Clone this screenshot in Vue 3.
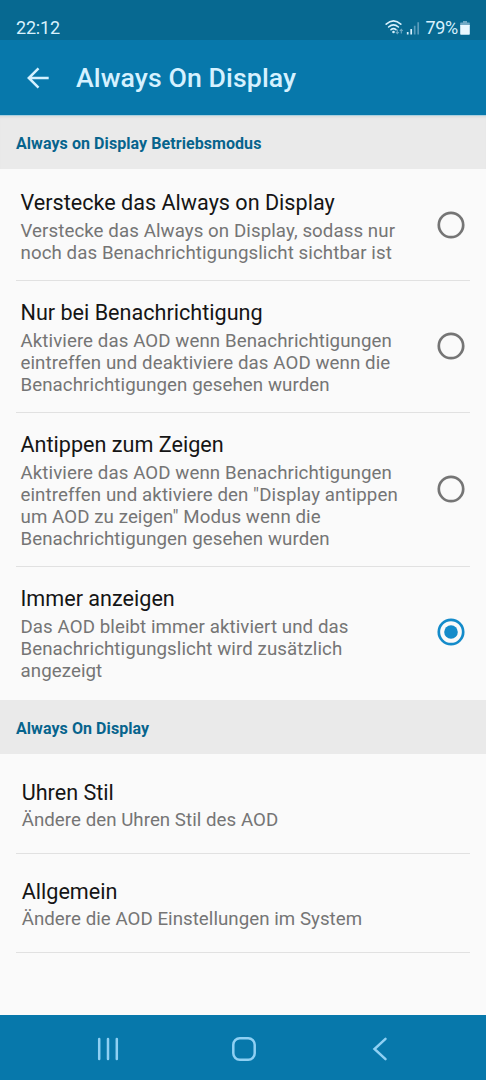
<script setup>
const modes = [
  {
    title: 'Verstecke das Always on Display',
    lines: ['Verstecke das Always on Display, sodass nur', 'noch das Benachrichtigungslicht sichtbar ist'],
    on: false,
  },
  {
    title: 'Nur bei Benachrichtigung',
    lines: ['Aktiviere das AOD wenn Benachrichtigungen', 'eintreffen und deaktiviere das AOD wenn die', 'Benachrichtigungen gesehen wurden'],
    on: false,
  },
  {
    title: 'Antippen zum Zeigen',
    lines: ['Aktiviere das AOD wenn Benachrichtigungen', 'eintreffen und aktiviere den "Display antippen', 'um AOD zu zeigen" Modus wenn die', 'Benachrichtigungen gesehen wurden'],
    on: false,
  },
  {
    title: 'Immer anzeigen',
    lines: ['Das AOD bleibt immer aktiviert und das', 'Benachrichtigungslicht wird zusätzlich', 'angezeigt'],
    on: true,
  },
]
const links = [
  { title: 'Uhren Stil', text: 'Ändere den Uhren Stil des AOD' },
  { title: 'Allgemein', text: 'Ändere die AOD Einstellungen im System' },
]
</script>

<template>
  <div class="screen">
    <div class="status">
      <span class="time">22:12</span>
      <svg class="signals" width="36" height="18" viewBox="0 0 36 18" fill="none">
        <g stroke="#d8f1fd" stroke-width="1.6" stroke-linecap="round">
          <path d="M1.2 5.2Q8.5-1.6 15.8 5.2" />
          <path d="M3.6 8Q8.5 3.6 13.4 8" />
          <path d="M6 10.7Q8.5 8.6 11 10.7" />
        </g>
        <circle cx="8.5" cy="13" r="1.3" fill="#d8f1fd" />
        <path d="M12.3 10.5v4M10.8 13l1.5 1.7 1.5-1.7M16.3 14.5v-4M14.8 12l1.5-1.7 1.5 1.7" stroke="#6fa9c4" stroke-width="1.1" />
        <path d="M22.7 13v2.6M26.2 10v5.6" stroke="#d8f1fd" stroke-width="1.7" />
        <path d="M29.7 6.7v8.9M33.2 3.2v12.4" stroke="#5b9dbc" stroke-width="1.7" />
      </svg>
      <span class="percent">79%</span>
      <svg class="battery" width="10" height="16" viewBox="0 0 10 16">
        <path d="M3 1h4v1.5h2.2a.6.6 0 0 1 .6.6V6H.2V3.1a.6.6 0 0 1 .6-.6H3z" fill="#72aac5" />
        <path d="M.2 5h9.600v9a.8.8 0 0 1-.8.8H1a.8.8 0 0 1-.8-.8z" fill="#e9f8ff" />
      </svg>
    </div>
    <header class="bar">
      <svg class="back" width="24" height="24" viewBox="0 0 24 24" fill="none" stroke="#d5f1ff" stroke-width="2.500">
        <path d="M22.700 12H3M12.500 2.300L2.800 12l9.700 9.700" />
      </svg>
      <h1>Always On Display</h1>
    </header>
    <h2 class="first">Always on Display Betriebsmodus</h2>
    <div class="modes">
      <div v-for="m in modes" :key="m.title" class="row">
        <div class="text">
          <div class="title">{{ m.title }}</div>
          <div v-for="l in m.lines" :key="l" class="desc">{{ l }}</div>
        </div>
        <svg class="radio" :class="{ on: m.on }" width="28" height="28" viewBox="0 0 28 28">
          <circle class="ring" cx="14" cy="14" r="12.200" />
          <circle v-if="m.on" class="dot" cx="14" cy="14" r="6.800" />
        </svg>
      </div>
    </div>
    <h2>Always On Display</h2>
    <div class="links">
      <div v-for="l in links" :key="l.title" class="link">
        <div class="title">{{ l.title }}</div>
        <div class="desc">{{ l.text }}</div>
      </div>
    </div>
    <nav>
      <svg width="24" height="26" viewBox="0 0 24 26"><path d="M3.200 3v20M12 3v20M20.800 3v20" /></svg>
      <svg width="26" height="26" viewBox="0 0 26 26"><rect x="2.300" y="2.300" width="21.400" height="21.400" rx="6.500" /></svg>
      <svg width="24" height="26" viewBox="0 0 24 26"><path d="M17.500 2.800L6.500 13l11 10.200" /></svg>
    </nav>
  </div>
</template>

<style>
body { margin: 0; background: #fafafa; }
</style>

<style scoped>
.screen {
  width: 486px;
  height: 1080px;
  display: flex;
  flex-direction: column;
  overflow: hidden;
  background: #fafafa;
  font-family: Roboto, sans-serif;
  white-space: nowrap;
}
.status {
  box-sizing: border-box;
  height: 40px;
  flex: none;
  padding: 16px 16px 0 16px;
  display: flex;
  align-items: center;
  background: #076991;
  color: #d8f1fd;
  font-size: 18px;
  line-height: 24px;
}
.time { flex: 1; letter-spacing: -0.2px; }
.percent { margin-left: 4px; letter-spacing: -0.3px; }
.battery { margin-left: 2px; }
.bar {
  box-sizing: border-box;
  height: 75px;
  flex: none;
  display: flex;
  align-items: center;
  padding-left: 26px;
  background: #0778ab;
}
h1 {
  margin: 0 0 0 26px;
  font-size: 26.700px;
  line-height: 32px;
  font-weight: 500;
  letter-spacing: 0.08px;
  color: #d5f1ff;
}
h2 {
  box-sizing: border-box;
  margin: 0;
  height: 54px;
  flex: none;
  padding: 2px 16px 0;
  background: #eaeaea;
  color: #07648d;
  font-size: 16px;
  line-height: 54px;
  font-weight: 700;
  letter-spacing: 0.07px;
}
.first { box-shadow: inset 0 1px 0 #a9cfdf, inset 0 4px 3px -2px #d5d8d9; }
.row {
  display: flex;
  align-items: center;
  justify-content: space-between;
  margin: 0 16px;
  padding: 19px 5px 16px 4.500px;
  border-bottom: 1px solid #e1e1e1;
}
.row:first-child { padding-top: 21px; }
.row:last-child { padding-bottom: 17px; border-bottom-color: transparent; }
.row .title { margin-bottom: 4px; }
.title {
  font-size: 21.600px;
  line-height: 26px;
  color: #151515;
}
.desc {
  font-size: 18.700px;
  line-height: 22px;
  color: #757575;
  letter-spacing: 0.08px;
}
.radio { flex: none; margin-bottom: 4px; }
.ring { fill: none; stroke: #757575; stroke-width: 2.700; }
.on .ring { stroke: #148bca; }
.dot { fill: #148bca; }
.link {
  box-sizing: border-box;
  height: 99px;
  margin: 0 16px;
  padding: 25px 6px 0 5.700px;
  border-bottom: 1px solid #e1e1e1;
}
.links { padding-top: 1px; }
.link .desc { margin-top: 3px; letter-spacing: 0.04px; }
nav {
  height: 65px;
  flex: none;
  margin-top: auto;
  padding: 2px 94px 0 96px;
  box-sizing: border-box;
  display: flex;
  align-items: center;
  justify-content: space-between;
  background: #0778ab;
}
nav svg { fill: none; stroke: #8fd0f3; stroke-width: 2.500; stroke-linecap: round; }
</style>
